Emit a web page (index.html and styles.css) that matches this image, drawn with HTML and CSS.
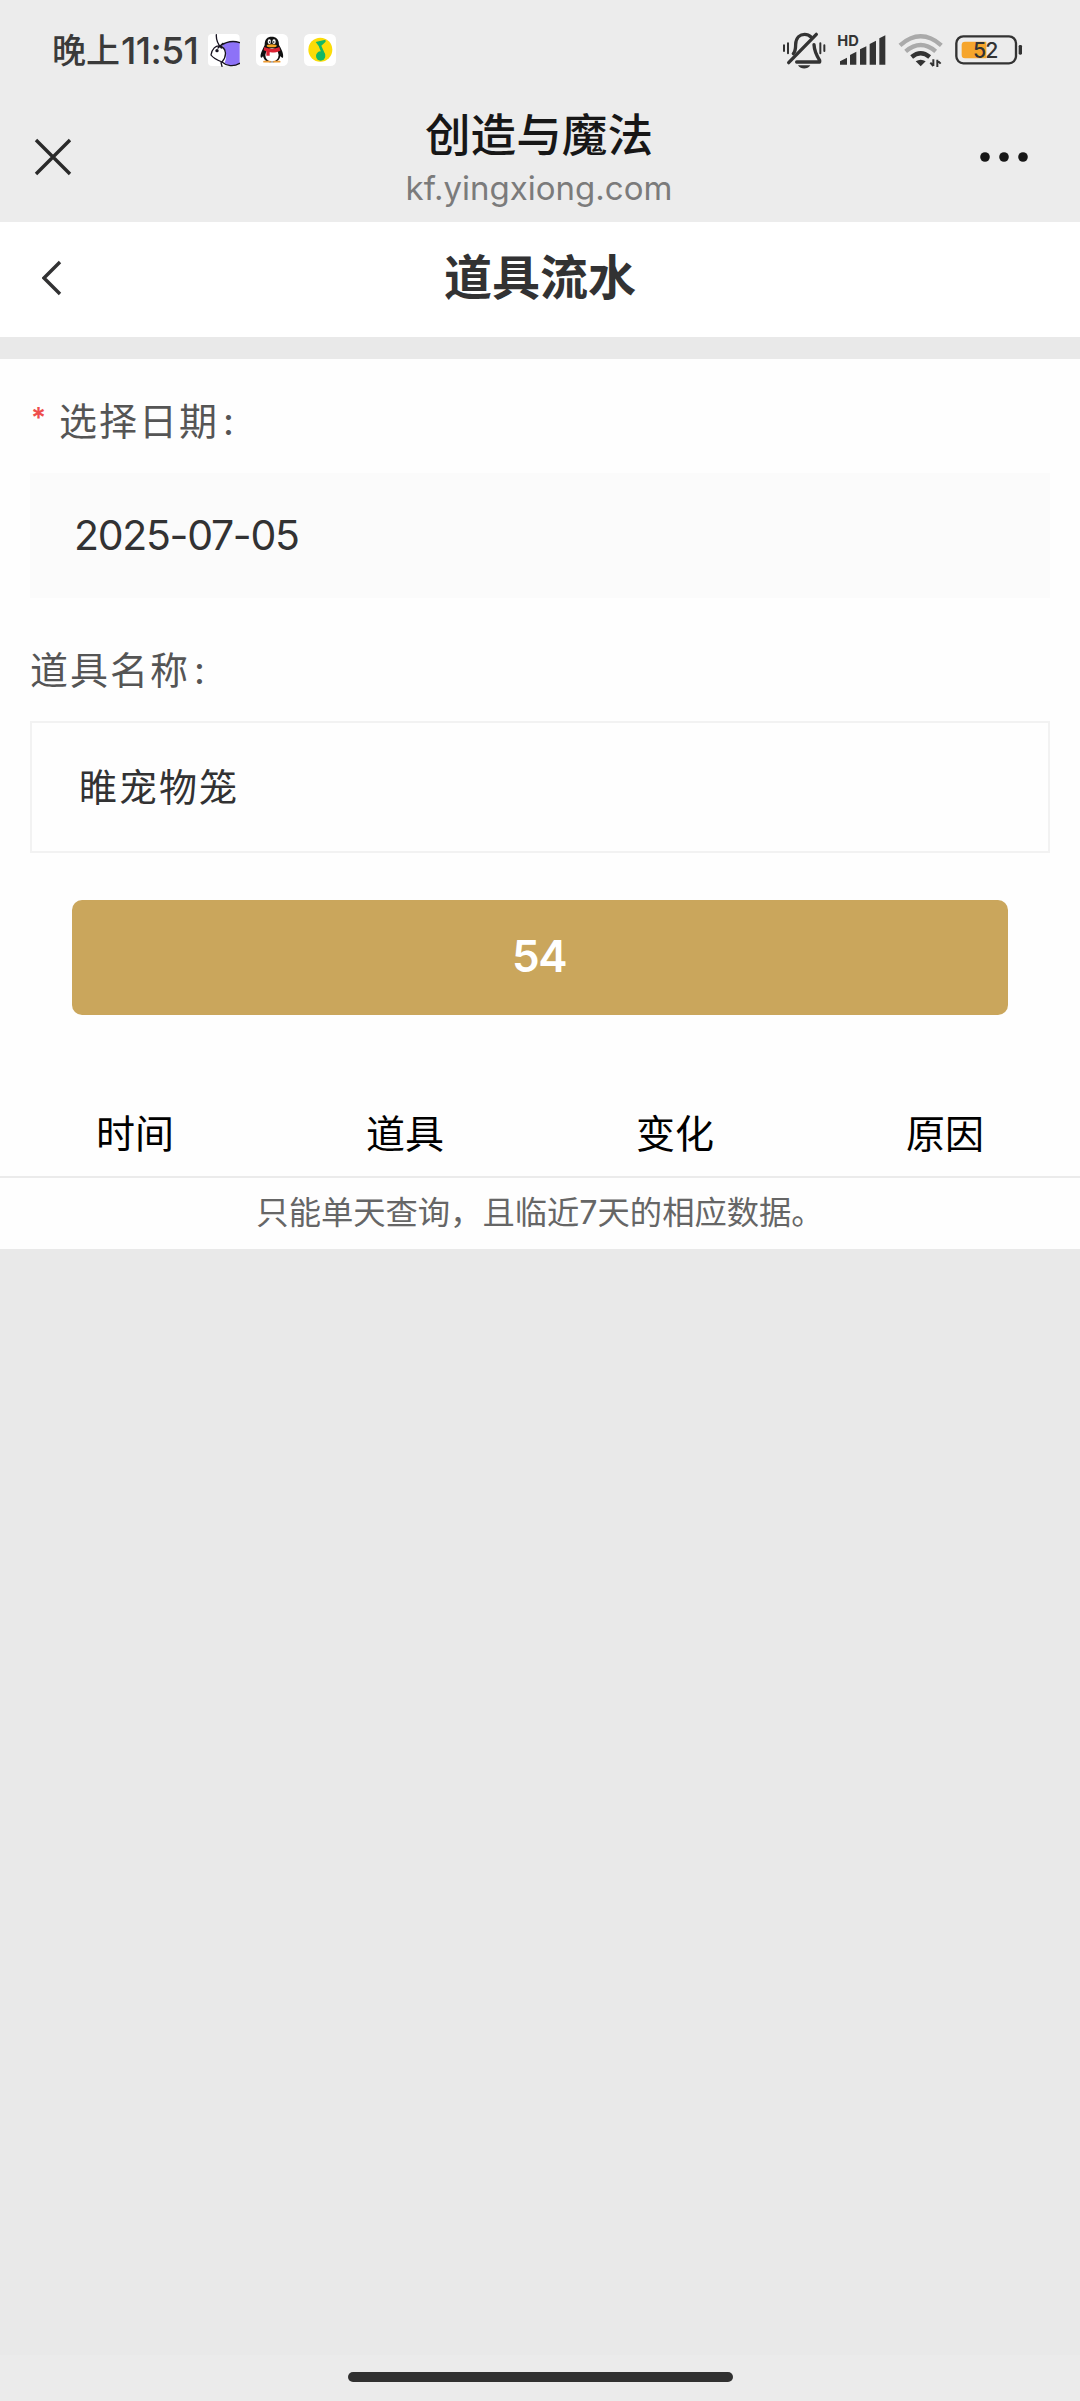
FILE: index.html
```html
<!DOCTYPE html>
<html lang="zh-CN">
<head>
<meta charset="utf-8">
<title>道具流水</title>
<link rel="stylesheet" href="styles.css">
</head>
<body>
<div class="status">
  <div class="clock"><span class="clock-label">晚上</span><span class="clock-time">11:51</span></div>
  <svg width="32" height="65" viewBox="535 0 96 195">
    <rect x="535" y="42" width="95" height="96" rx="12" fill="#fff"/>
    <path d="M577 76C594 63 613 63 630 68V130C614 141 598 138 585 128C594 109 590 90 577 76Z" fill="#8d72f7"/>
    <path d="M571 78C594 62 613 62 630 68M544 105C547 86 558 76 571 78C590 84 593 108 577 126C562 120 550 114 544 105ZM577 126C590 138 612 141 630 130M560 44C559 61 563 71 575 84M565 84L580 70M574 128L577 139" fill="none" stroke="#171320" stroke-width="4" stroke-linecap="round" stroke-linejoin="round"/>
    <circle cx="562" cy="92" r="5" fill="#171320"/>
  </svg>
  <svg class="app" width="32" height="65" viewBox="679 0 96 195">
    <rect x="679" y="42" width="96" height="96" rx="16" fill="#fff"/>
    <path d="M705 75C705 57 713 50 726 50S748 57 748 75C754 85 763 101 760 113C757 115 753 110 752 108C750 121 740 127 726 127S703 121 700 108C698 113 694 115 693 111C691 101 700 87 705 75Z" fill="#111"/>
    <ellipse cx="727" cy="105" rx="20" ry="20" fill="#fff"/>
    <ellipse cx="719" cy="65" rx="5" ry="7" fill="#fff"/><ellipse cx="733" cy="65" rx="5" ry="7" fill="#fff"/>
    <circle cx="720" cy="66" r="2.5"/><circle cx="732" cy="66" r="2.5"/>
    <ellipse cx="726" cy="77" rx="15" ry="4.5" fill="#f4a321"/>
    <path d="M704 81C719 88 735 88 749 81L752 92C742 97 730 98 720 97V107H710V94L702 91Z" fill="#dc2333"/>
    <path d="M703 125H721M733 125H750" stroke="#ee9b32" stroke-width="5" stroke-linecap="round"/>
  </svg>
  <svg class="app" width="32" height="65" viewBox="824 0 96 195">
    <rect x="824" y="42" width="96" height="96" rx="16" fill="#fff"/>
    <circle cx="873" cy="89" r="36" fill="#fbdc08"/>
    <circle cx="874" cy="108" r="14" fill="#12b866"/>
    <path d="M859 66L888 59L889 65L876 77L888 104L880 108L868 78Z" fill="#12b866"/>
  </svg>
  <div class="status-right">
    <svg width="45" height="65" viewBox="36 0 135 195">
      <g fill="none" stroke="#333" stroke-width="10" stroke-linecap="round" stroke-linejoin="round">
        <path d="M70 101C77 94 77 84 77 73C78 52 91 43 104 43C112 43 118 46 123 51M132 74C133 92 136 101 149 121V126H80"/>
        <path d="M139 43L56 128"/>
        <path d="M42 76V93M54 70V100M151 70V100M163 76V93" stroke-width="6"/>
      </g>
      <path d="M84 136H121C113 149 92 149 84 136Z" fill="#333"/>
    </svg>
    <svg width="50" height="65" viewBox="198 0 150 195">
      <text x="199" y="79" class="hd">HD</text>
      <path d="M207 134V124L228 113V134ZM237 134V105L256 95V134ZM267 134V88L286 79V134ZM296 134V72L315 62V134ZM325 134V55L343 46V134Z" fill="#333"/>
    </svg>
    <svg width="47" height="65" viewBox="380 0 141 195">
      <g fill="none" stroke-width="13">
        <path d="M386 76Q448 22 510 76" stroke="#aaa"/>
        <path d="M403 94Q448 56 493 94" stroke="#aaa"/>
        <path d="M421 111Q448 88 475 111" stroke="#333"/>
      </g>
      <path d="M433 124Q448 114 463 124L448 139Z" fill="#333"/>
      <path d="M486 138V118M486 138L477 128M498 119V141M498 121L508 131" fill="none" stroke="#333" stroke-width="6"/>
    </svg>
    <svg width="68" height="65" viewBox="556 0 204 195">
      <rect x="560" y="49" width="179" height="81" rx="21" fill="none" stroke="#333" stroke-width="7"/>
      <path d="M586 65H650V115H586Q576 115 576 105V75Q576 65 586 65Z" fill="#f6a52c"/>
      <rect x="747" y="75" width="10" height="29" rx="4" fill="#333"/>
      <text x="610" y="114" class="charge" textLength="76">52</text>
    </svg>
  </div>
</div>
<header class="browser">
  <svg width="40" height="40" viewBox="0 0 40 40"><path d="M3 3L37 37M37 3L3 37" fill="none" stroke="#2a2a2a" stroke-width="3.400"/></svg>
  <div class="site"><div class="site-name">创造与魔法</div><div class="site-url">kf.yingxiong.com</div></div>
  <svg class="more" width="50" height="40" viewBox="0 0 50 40"><g fill="#171717"><circle cx="6" cy="20" r="4.800"/><circle cx="25" cy="20" r="4.800"/><circle cx="44" cy="20" r="4.800"/></g></svg>
</header>
<nav class="nav">
  <svg width="20" height="36" viewBox="0 0 20 36"><path d="M18 2L2 18L18 34" fill="none" stroke="#323233" stroke-width="3.400"/></svg>
  <h1>道具流水</h1>
</nav>
<main class="panel">
  <div class="label"><span class="required">*</span>选择日期<span class="colon">:</span></div>
  <div class="field date">2025-07-05</div>
  <div class="label label-name">道具名称<span class="colon">:</span></div>
  <div class="field name">睢宠物笼</div>
  <button class="submit">54</button>
  <div class="heads"><span>时间</span><span>道具</span><span>变化</span><span>原因</span></div>
  <p class="note">只能单天查询，且临近7天的相应数据。</p>
</main>
<footer class="home"><div class="home-bar"></div></footer>
</body>
</html>
```

FILE: styles.css
```css
* { box-sizing: border-box; }
body {
  margin: 0;
  width: 1080px;
  height: 2401px;
  display: flex;
  flex-direction: column;
  background: #e9e9e9;
  font-family: Inter, "Noto Sans CJK SC", sans-serif;
  color: #323233;
}
svg { display: block; flex: none; }
.status {
  height: 85px;
  padding: 20px 57px 0 52px;
  display: flex;
  background: #ececec;
}
.clock {
  width: 156px;
  height: 61px;
  display: flex;
  align-items: center;
  font-weight: 500;
  color: #3a3a3a;
  line-height: 61px;
}
.clock-label { font-size: 34px; width: 69px; }
.clock-time { font-size: 37px; letter-spacing: -0.6px; }
.app { margin-left: 16px; }
.status-right {
  margin-left: auto;
  display: flex;
  gap: 10.500px;
}
.hd { font: 700 44px Inter, sans-serif; fill: #333; }
.charge { font: 500 64px Inter, sans-serif; fill: #333; }
.browser {
  height: 137px;
  padding: 0 51px 0 33px;
  display: grid;
  grid-template-columns: 178px 1fr 162px;
  background: #ececec;
}
.browser > svg { margin-top: 52px; }
.more { justify-self: end; }
.site { text-align: center; }
.site-name {
  margin-top: 23px;
  line-height: 56px;
  font-size: 45.600px;
  font-weight: 500;
  color: #171717;
}
.site-url {
  line-height: 44px;
  margin-top: 2px;
  font-size: 33px;
  color: #7b7b7b;
}
.nav {
  height: 115px;
  display: grid;
  grid-template-columns: 1fr auto 1fr;
  align-items: center;
  padding: 0 42px 3px;
  background: #fff;
}
.nav h1 {
  margin: 0;
  font-size: 48px;
  line-height: 60px;
  font-weight: 700;
}
.panel {
  margin-top: 22px;
  height: 890px;
  background: #fefefe;
  display: flex;
  flex-direction: column;
}
.label {
  margin: 36px 30px 0;
  height: 52px;
  line-height: 52px;
  font-size: 38px;
  letter-spacing: 2px;
  color: #555;
  display: flex;
}
.required {
  width: 29px;
  line-height: 47px;
  padding-left: 1px;
  font-size: 28px;
  font-weight: 600;
  color: #ee4d4d;
}
.colon { margin-left: 4px; }
.field {
  margin: 26px 30px 0;
  display: flex;
  align-items: center;
}
.date {
  height: 125px;
  padding: 0 0 2px 44px;
  font-size: 41px;
  letter-spacing: -1.300px;
  background: #fbfbfb;
}
.label-name { margin-top: 46px; }
.name {
  margin-top: 25px;
  height: 132px;
  padding: 0 0 6px 47px;
  border: 2px solid #f2f2f2;
  font-size: 38px;
  letter-spacing: 2px;
}
.submit {
  margin: 47px 72px 0;
  height: 115px;
  padding: 0 2px 3px 0;
  border: 0;
  border-radius: 10px;
  background: #caa65c;
  color: #fff;
  font: 600 44px Inter, sans-serif;
  letter-spacing: -1.500px;
}
.heads {
  height: 163px;
  padding-top: 92px;
  display: grid;
  grid-template-columns: repeat(4, 1fr);
  text-align: center;
  line-height: 54px;
  font-size: 39px;
  color: #000;
  border-bottom: 2px solid #ebebeb;
}
.note {
  margin: 12px 0 0;
  text-align: center;
  font-size: 32.300px;
  line-height: 46px;
  color: #666;
}
.home {
  height: 46px;
  margin-top: auto;
  padding-top: 17px;
  background: #ebebeb;
}
.home-bar {
  width: 385px;
  height: 10px;
  margin: 0 auto;
  border-radius: 5px;
  background: #303030;
}
```
